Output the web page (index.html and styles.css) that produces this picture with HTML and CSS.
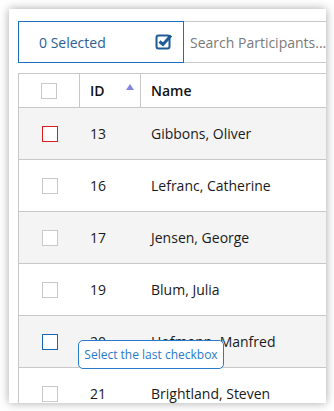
FILE: index.html
```html
<!DOCTYPE html>
<html>
<head>
    <meta charset="utf-8">
    <title>Participants</title>
    <link rel="stylesheet" href="styles.css">
</head>
<body>
    <div class="panel">
        <div class="toolbar">
            <div class="selected-box">
                <span class="selected-count">0 Selected</span>
                <svg class="select-all" width="18" height="18" viewBox="0 0 18 18">
                    <rect x="1.5" y="3.5" width="13" height="13" rx="2" fill="none" stroke="#1d5a98" stroke-width="2"/>
                    <path d="M4.5 9.5 L8 12.5 L16 3.5" fill="none" stroke="#1d5a98" stroke-width="3" stroke-linejoin="miter"/>
                </svg>
            </div>
            <div class="search">Search Participants...</div>
        </div>

        <div class="grid">
            <div class="row head">
                <div class="cell"><span class="box"></span></div>
                <div class="cell">ID<span class="sort"></span></div>
                <div class="cell">Name</div>
            </div>
            <div class="row alt">
                <div class="cell"><span class="box error"></span></div>
                <div class="cell">13</div>
                <div class="cell">Gibbons, Oliver</div>
            </div>
            <div class="row">
                <div class="cell"><span class="box"></span></div>
                <div class="cell">16</div>
                <div class="cell">Lefranc, Catherine</div>
            </div>
            <div class="row alt">
                <div class="cell"><span class="box"></span></div>
                <div class="cell">17</div>
                <div class="cell">Jensen, George</div>
            </div>
            <div class="row">
                <div class="cell"><span class="box"></span></div>
                <div class="cell">19</div>
                <div class="cell">Blum, Julia</div>
            </div>
            <div class="row alt hint-row">
                <div class="cell"><span class="box active"></span></div>
                <div class="cell">20</div>
                <div class="cell">Hofmann, Manfred</div>
                <div class="tooltip">Select the last checkbox</div>
            </div>
            <div class="row">
                <div class="cell"><span class="box"></span></div>
                <div class="cell">21</div>
                <div class="cell">Brightland, Steven</div>
            </div>
        </div>
    </div>
</body>
</html>
```

FILE: styles.css
```css
body {
    margin: 0;
    background: #fff;
    font-family: "Open Sans", "Liberation Sans", sans-serif;
    font-size: 14px;
    color: #1a1a1a;
}
.panel {
    margin: 9px;
    width: 317px;
    height: 394px;
    box-sizing: border-box;
    padding: 12px 0 0 9px;
    background: #fff;
    overflow: hidden;
    box-shadow: 0 0 9px rgba(0,0,0,0.35);
}
.toolbar {
    display: flex;
    height: 42px;
    width: 360px;
}
.selected-box {
    width: 166px;
    box-sizing: border-box;
    border: 1px solid #1a6fc0;
    display: flex;
    align-items: center;
    justify-content: space-between;
    padding: 0 10px 0 20px;
}
.selected-count {
    color: #2b5f95;
}
.select-all {
    margin-top: -2px;
}
.search {
    flex: 1;
    box-sizing: border-box;
    border: 1px solid #c8c8c8;
    border-left: none;
    display: flex;
    align-items: center;
    padding-left: 6px;
    color: #7a7a7a;
}
.grid {
    margin-top: 10px;
    width: 360px;
    border-top: 1px solid #c8c8c8;
    border-left: 1px solid #c8c8c8;
}
.row {
    display: grid;
    grid-template-columns: 61px 61px 1fr;
    height: 51px;
    border-bottom: 1px solid #c8c8c8;
}
.row.head {
    height: 33px;
    font-weight: 600;
    color: #111;
}
.row.head .cell {
    border-right: 1px solid #c8c8c8;
    position: relative;
}
.row.alt {
    background: #f4f4f4;
}
.cell {
    display: flex;
    align-items: center;
    padding-left: 10px;
}
.cell:first-child {
    justify-content: center;
    padding-left: 0;
}
.box {
    width: 14px;
    height: 14px;
    border: 1px solid #c9c9c9;
    background: #fff;
}
.box.error {
    border-color: #d81e1e;
}
.box.active {
    border-color: #1a64b0;
}
.sort {
    position: absolute;
    right: 6px;
    top: 10px;
    width: 0;
    height: 0;
    border-left: 4px solid transparent;
    border-right: 4px solid transparent;
    border-bottom: 6px solid #8585e0;
}
.hint-row {
    position: relative;
}
.tooltip {
    position: absolute;
    left: 59px;
    top: 24px;
    width: 146px;
    height: 29px;
    box-sizing: border-box;
    border: 1px solid #2a7acb;
    border-radius: 5px;
    background: #fff;
    color: #2a7acb;
    font-size: 12px;
    display: flex;
    align-items: center;
    justify-content: center;
}
```
